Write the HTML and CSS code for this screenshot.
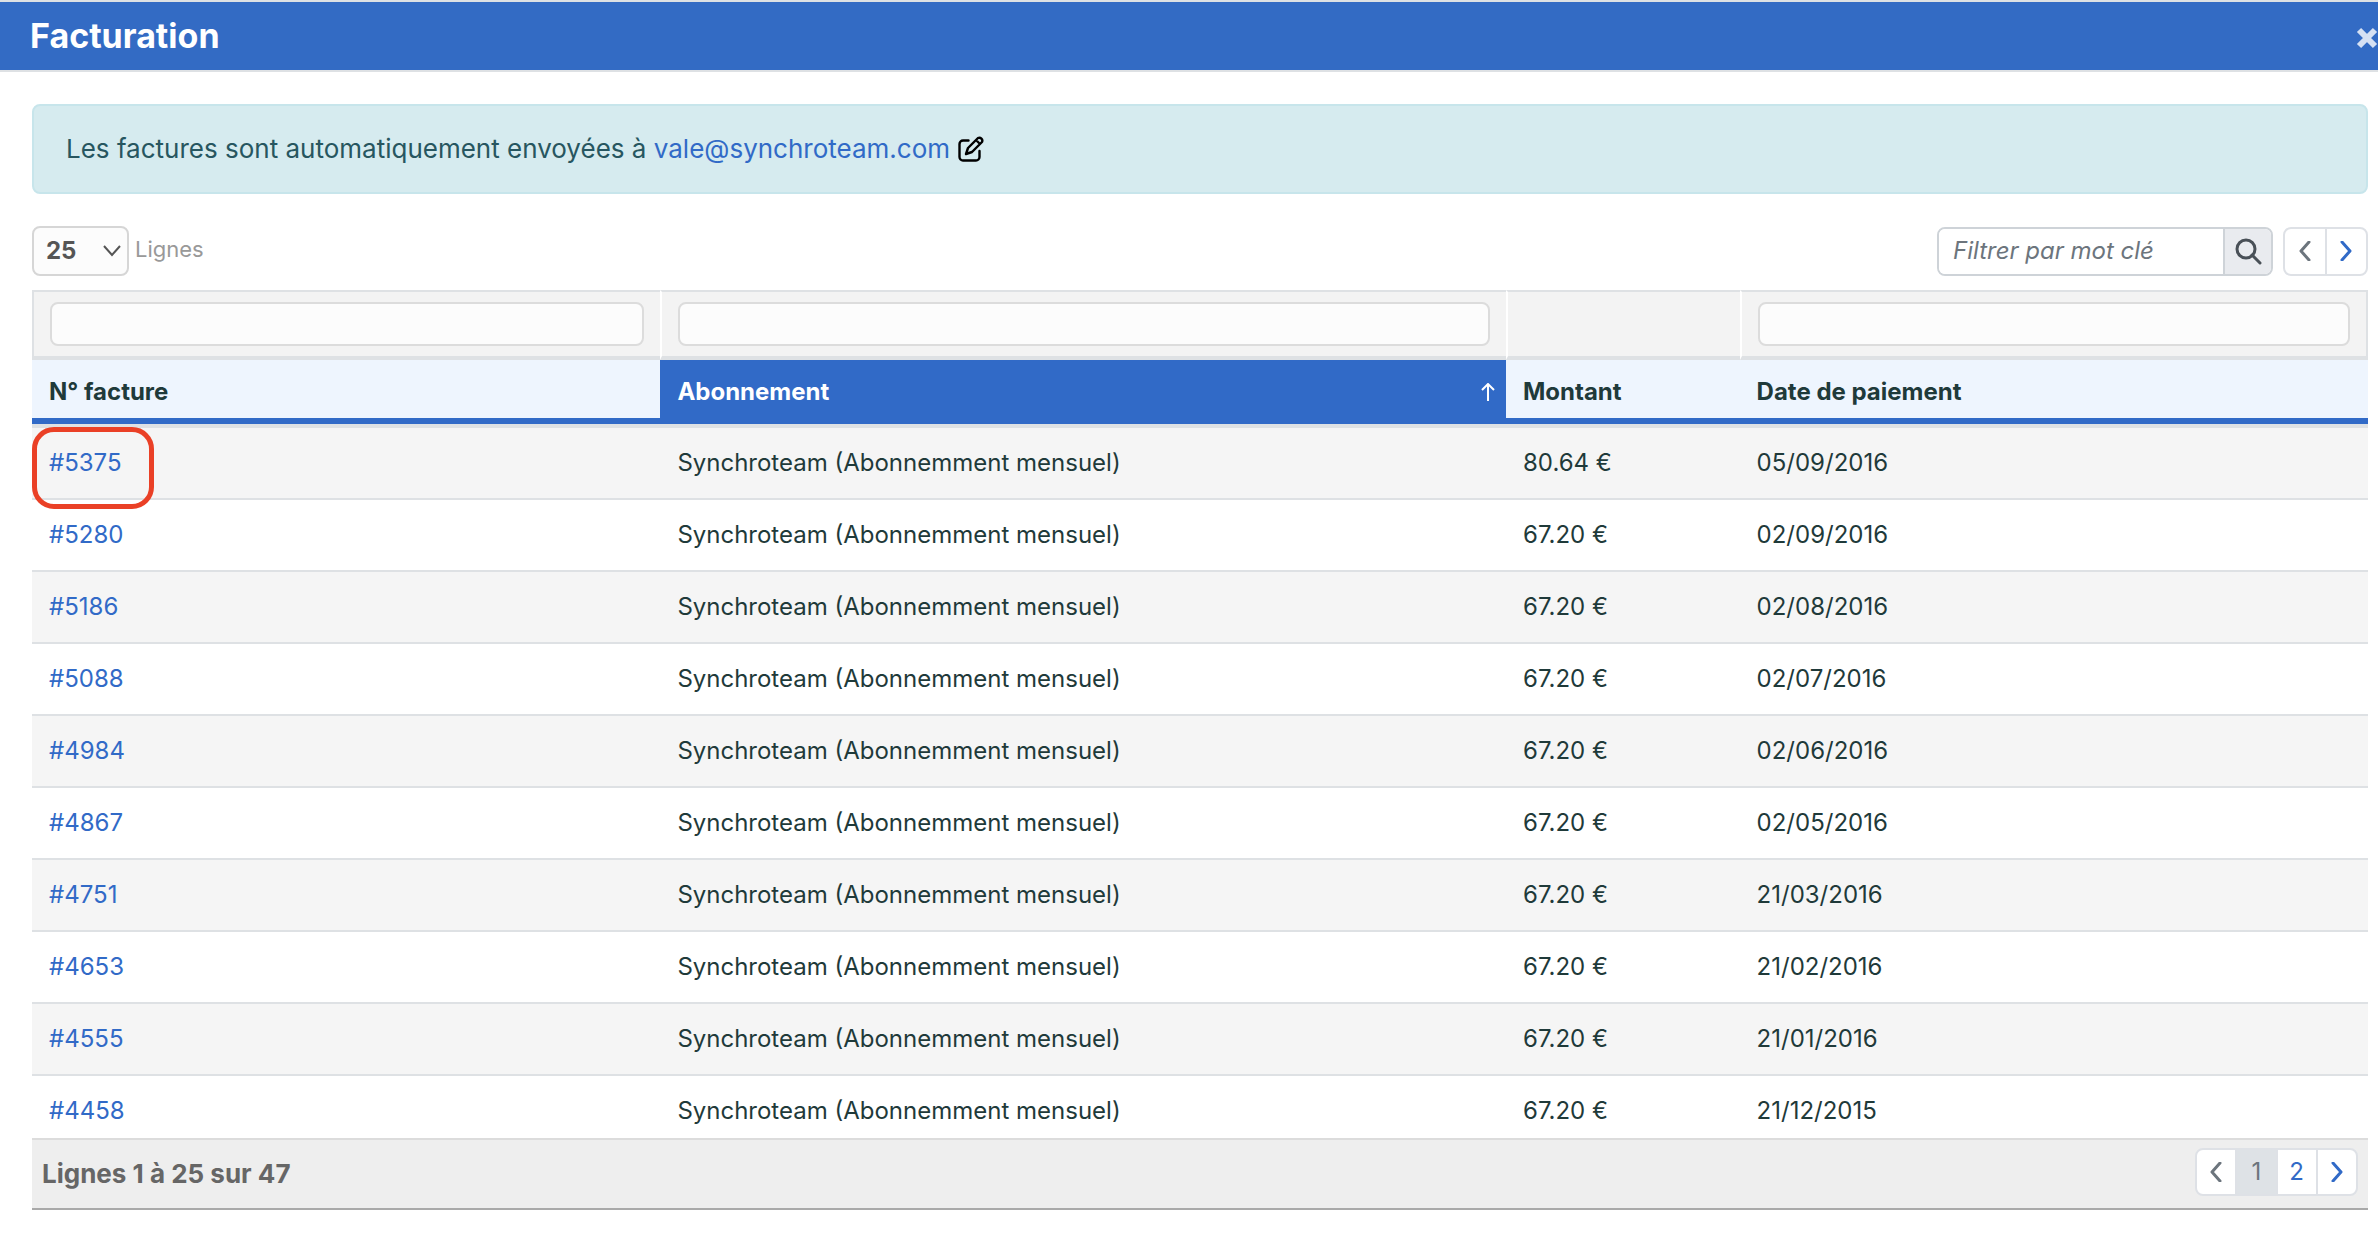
FILE: index.html
```html
<!DOCTYPE html>
<html lang="fr">
<head>
<meta charset="utf-8">
<meta name="viewport" content="width=device-width, initial-scale=1">
<title>Facturation</title>
<link rel="stylesheet" href="styles.css">
</head>
<body>
<header class="topbar">
  <h1 class="title">Facturation</h1>
  <button class="close" type="button" aria-label="Fermer">
    <svg width="22" height="22" viewBox="0 0 22 22"><path d="M3 3L19 19M19 3L3 19" stroke="currentColor" stroke-width="6" fill="none"/></svg>
  </button>
</header>
<main class="content">
  <p class="notice">
    <span>Les factures sont automatiquement envoyées à <a href="#">vale@synchroteam.com</a></span>
    <button class="edit" type="button" aria-label="Modifier">
      <svg width="26" height="26" viewBox="0 0 26 26" fill="none" stroke="currentColor" stroke-width="2.4" stroke-linecap="round" stroke-linejoin="round"><path d="M10.500 4.500H5a3.500 3.500 0 0 0-3.500 3.500v13a3.500 3.500 0 0 0 3.500 3.500h13a3.500 3.500 0 0 0 3.500-3.500v-6"/><path d="M8 18l2-6L20 2a3 3 0 0 1 4 4L14 16zM18 4l4 4"/></svg>
    </button>
  </p>
  <div class="toolbar">
    <div class="length">
      <select class="select" id="rows" name="rows"><option>25</option></select>
      <label for="rows">Lignes</label>
    </div>
    <div class="tools">
      <form class="search">
        <input type="text" placeholder="Filtrer par mot clé" aria-label="Filtrer par mot clé">
        <button type="button" aria-label="Rechercher">
          <svg width="28" height="28" viewBox="0 0 28 28" fill="none" stroke="currentColor" stroke-linecap="round"><circle cx="12" cy="12" r="9" stroke-width="3"/><path d="M18 18L26 26" stroke-width="3"/></svg>
        </button>
      </form>
      <nav class="pager" aria-label="Pages">
        <button type="button" disabled aria-label="Page précédente"><svg width="12" height="20" viewBox="0 0 12 20"><path d="M10 1L2 10L10 19"/></svg></button>
        <button type="button" aria-label="Page suivante"><svg width="12" height="20" viewBox="0 0 12 20"><path d="M2 1L10 10L2 19"/></svg></button>
      </nav>
    </div>
  </div>
  <div class="scroller">
    <table class="grid">
      <colgroup><col class="c-num"><col class="c-sub"><col class="c-amount"><col class="c-date"></colgroup>
      <thead>
        <tr class="filters">
          <td><input type="text" aria-label="Filtrer N° facture"></td>
          <td><input type="text" aria-label="Filtrer Abonnement"></td>
          <td></td>
          <td><input type="text" aria-label="Filtrer Date de paiement"></td>
        </tr>
        <tr class="heads">
          <th scope="col">N° facture</th>
          <th scope="col" class="sorted" aria-sort="ascending"><div class="sort">Abonnement <svg width="14" height="18" viewBox="0 0 14 18"><path d="M7 18V1M1 7L7 1L13 7" fill="none" stroke="currentColor" stroke-width="2"/></svg></div></th>
          <th scope="col">Montant</th>
          <th scope="col">Date de paiement</th>
        </tr>
      </thead>
      <tbody>
        <tr><td class="marked"><a href="#">#5375</a></td><td>Synchroteam (Abonnemment mensuel)</td><td>80.64 €</td><td>05/09/2016</td></tr>
        <tr><td><a href="#">#5280</a></td><td>Synchroteam (Abonnemment mensuel)</td><td>67.20 €</td><td>02/09/2016</td></tr>
        <tr><td><a href="#">#5186</a></td><td>Synchroteam (Abonnemment mensuel)</td><td>67.20 €</td><td>02/08/2016</td></tr>
        <tr><td><a href="#">#5088</a></td><td>Synchroteam (Abonnemment mensuel)</td><td>67.20 €</td><td>02/07/2016</td></tr>
        <tr><td><a href="#">#4984</a></td><td>Synchroteam (Abonnemment mensuel)</td><td>67.20 €</td><td>02/06/2016</td></tr>
        <tr><td><a href="#">#4867</a></td><td>Synchroteam (Abonnemment mensuel)</td><td>67.20 €</td><td>02/05/2016</td></tr>
        <tr><td><a href="#">#4751</a></td><td>Synchroteam (Abonnemment mensuel)</td><td>67.20 €</td><td>21/03/2016</td></tr>
        <tr><td><a href="#">#4653</a></td><td>Synchroteam (Abonnemment mensuel)</td><td>67.20 €</td><td>21/02/2016</td></tr>
        <tr><td><a href="#">#4555</a></td><td>Synchroteam (Abonnemment mensuel)</td><td>67.20 €</td><td>21/01/2016</td></tr>
        <tr><td><a href="#">#4458</a></td><td>Synchroteam (Abonnemment mensuel)</td><td>67.20 €</td><td>21/12/2015</td></tr>
      </tbody>
    </table>
  </div>
  <footer class="summary">
    <strong>Lignes 1 à 25 sur 47</strong>
    <nav class="pager numbered" aria-label="Pagination">
      <button type="button" disabled aria-label="Page précédente"><svg width="12" height="20" viewBox="0 0 12 20"><path d="M10 1L2 10L10 19"/></svg></button>
      <button type="button" class="current" aria-current="page">1</button>
      <button type="button">2</button>
      <button type="button" aria-label="Page suivante"><svg width="12" height="20" viewBox="0 0 12 20"><path d="M2 1L10 10L2 19"/></svg></button>
    </nav>
  </footer>
</main>
</body>
</html>
```
FILE: styles.css
```css
:root {
  --blue: #316ac7;
  --line: #dee1e4;
  --ink: #1f3a3a;
}

*, *::after { box-sizing: border-box; }

body {
  margin: 0;
  height: 100vh;
  display: flex;
  flex-direction: column;
  background: #fff;
  color: var(--ink);
  font-family: Inter, "Liberation Sans", sans-serif;
  font-size: 24px;
  line-height: 32px;
}

button, input, select { font: inherit; color: inherit; margin: 0; }
button { padding: 0; border: 0; background: none; display: flex; align-items: center; justify-content: center; }
a { color: var(--blue); text-decoration: none; }
svg { display: block; }

.topbar {
  display: flex;
  align-items: center;
  justify-content: space-between;
  height: 72px;
  padding-left: 30px;
  flex: none;
  background: #336bc4;
  border-top: 2px solid var(--line);
  border-bottom: 2px solid var(--line);
  color: #fff;
}
.title { margin: 0; font-size: 34px; line-height: 40px; font-weight: 700; }
.close { padding-top: 4px; color: #d6e1f3; }

.content {
  flex: 1;
  min-height: 0;
  display: flex;
  flex-direction: column;
  padding: 32px 10px 28px 32px;
}

.notice {
  display: flex;
  align-items: center;
  gap: 8px;
  flex: none;
  height: 90px;
  margin: 0;
  padding: 0 32px;
  background: #d6ebef;
  border: 2px solid #c7e5eb;
  border-radius: 8px;
  color: #275660;
  font-size: 26px;
}
.edit { color: #000; }

.toolbar {
  display: flex;
  align-items: center;
  justify-content: space-between;
  flex: none;
  margin: 32px 0 14px;
}
.length { display: flex; align-items: center; gap: 6px; color: #999; }
.length label { padding-bottom: 4px; font-size: 22px; }
.select {
  appearance: none;
  width: 97px;
  height: 50px;
  padding: 0 12px;
  border: 2px solid #d6d6d6;
  border-radius: 8px;
  background: #fcfcfc url("data:image/svg+xml,%3Csvg xmlns='http://www.w3.org/2000/svg' width='18' height='12' viewBox='0 0 18 12'%3E%3Cpath d='M1 1L9 10L17 1' fill='none' stroke='%23555' stroke-width='2'/%3E%3C/svg%3E") no-repeat right 6px center;
  color: #555;
  font-weight: 700;
}
.tools { display: flex; align-items: center; gap: 10px; }
.search {
  display: flex;
  width: 336px;
  height: 49px;
  border: 2px solid #ced3d8;
  border-radius: 8px;
  overflow: hidden;
}
.search input { flex: 1; min-width: 0; border: 0; padding: 0 14px; font-style: italic; outline: 0; }
.search input::placeholder { color: #6c757d; opacity: 1; }
.search button { width: 48px; background: #e9ebef; border-left: 2px solid #ced3d8; color: #495057; }

.pager {
  display: flex;
  width: 85px;
  height: 49px;
  border: 2px solid #dee1e6;
  border-radius: 8px;
  background: #fff;
  overflow: hidden;
  color: var(--blue);
}
.pager button { flex: 1; }
.pager button + button { border-left: 2px solid #dee1e6; }
.pager button:disabled { color: #6c757d; }
.pager path { fill: none; stroke: currentColor; stroke-width: 3; stroke-linecap: round; stroke-linejoin: round; }
.numbered { width: 163px; height: 48px; }
.pager .current { background: #dee2e6; color: #6c757d; }

.scroller { flex: 1; min-height: 0; overflow: hidden; }
.grid { width: 100%; table-layout: fixed; border-spacing: 0; text-align: left; }
.c-num, .c-date { width: 26.9%; }
.c-sub { width: 36.2%; }
.c-amount { width: 10%; }
.grid th, .grid td { padding: 0 17px; }

.filters td { height: 70px; background: #f3f3f3; border-top: 2px solid var(--line); border-bottom: 4px solid var(--line); }
.grid .filters td { padding: 0 16px; }
.filters td + td { border-left: 2px solid #fff; }
.filters td:first-child { border-left: 2px solid var(--line); }
.filters td:last-child { border-right: 2px solid var(--line); }
.filters input { display: block; width: 100%; height: 44px; padding: 0 12px; border: 2px solid #dcdcdc; border-radius: 8px; background: #fcfcfc; }

.grid .heads th { height: 64px; padding-top: 6px; background: #eef5fe; border-bottom: 6px solid var(--blue); font-weight: 700; }
.grid .heads .sorted { padding-right: 11px; background: var(--blue); color: #fff; }
.sort { display: flex; align-items: center; justify-content: space-between; }

.grid tbody td { height: 72px; border-bottom: 2px solid var(--line); }
.grid tbody tr:nth-child(odd) { background: #f5f5f5; }
.grid tbody tr:first-child td { height: 76px; border-top: 4px solid var(--line); }
.marked { position: relative; }
.marked::after {
  content: "";
  position: absolute;
  left: 0;
  top: -1px;
  width: 122px;
  height: 82px;
  border: 5px solid #ea4026;
  border-radius: 22px;
  pointer-events: none;
}

.summary {
  display: flex;
  align-items: center;
  justify-content: space-between;
  flex: none;
  height: 72px;
  padding: 0 10px;
  background: #eee;
  border-top: 2px solid #dcdcdc;
  border-bottom: 2px solid #a9a9a9;
  color: #666;
  font-size: 26px;
}
.numbered { margin-bottom: 4px; }
.numbered button { font-size: 24px; }
```
